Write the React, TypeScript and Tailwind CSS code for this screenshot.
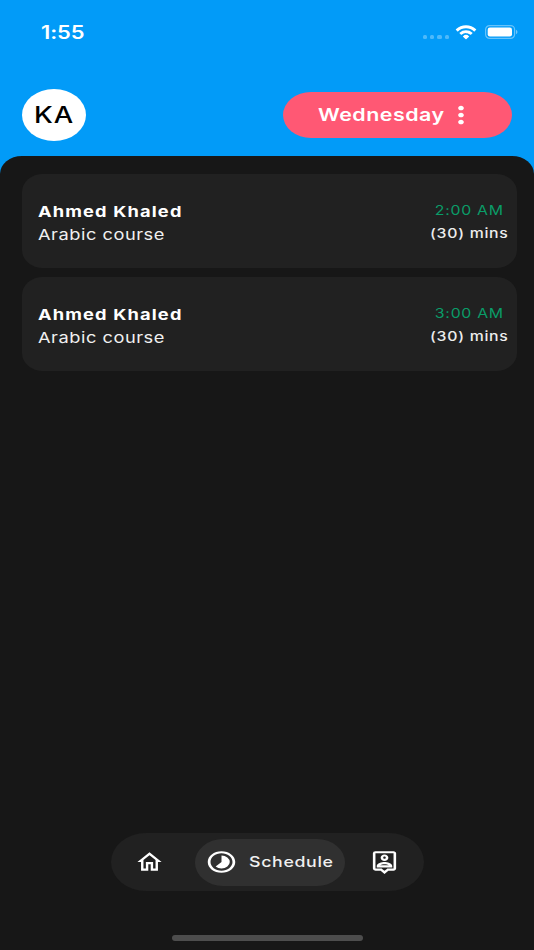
import type { ReactNode } from "react";
import { MdMoreVert, MdOutlineHome, MdOutlinePersonPin, MdOutlineTimelapse } from "react-icons/md";

interface Lesson {
  id: number;
  name: string;
  course: string;
  time: string;
  duration: string;
}

const lessons: Lesson[] = [
  { id: 1, name: "Ahmed Khaled", course: "Arabic course", time: "2:00 AM", duration: "(30) mins" },
  { id: 2, name: "Ahmed Khaled", course: "Arabic course", time: "3:00 AM", duration: "(30) mins" },
];

// Wide lettering used across the whole app
function Wide({ className = "", children }: { className?: string; children: ReactNode }) {
  return (
    <span className={`block whitespace-nowrap origin-left scale-x-[1.216] ${className}`}>{children}</span>
  );
}

function StatusBar() {
  return (
    <div className="flex h-[64px] items-center justify-between pl-[41px] pr-[15px]">
      <Wide className="pt-[2px] text-[18px] leading-[22px] font-semibold tracking-[-0.1px]">1:55</Wide>
      <div className="flex items-center">
        <div className="mr-[6px] mt-[9px] flex gap-[3px]">
          {[0, 1, 2, 3].map((i) => (
            <div key={i} className="h-[4px] w-[4.3px] rounded-[1.5px] bg-white/30" />
          ))}
        </div>
        <svg className="mr-[8px] h-[15px] w-[22px]" viewBox="0 0 17 12" preserveAspectRatio="none" fill="#fff">
          <path d="M8.5 2.6c2.3 0 4.5.9 6.2 2.5.1.1.3.1.4 0l1.2-1.3c.1-.1.1-.3 0-.4a11.3 11.3 0 0 0-15.6 0c-.1.1-.1.3 0 .4l1.2 1.3c.1.1.3.1.4 0A9 9 0 0 1 8.5 2.6z" />
          <path d="M8.5 6.5c1.3 0 2.5.5 3.4 1.3.1.1.3.1.4 0l1.2-1.3c.1-.1.1-.3 0-.4a7.3 7.3 0 0 0-10 0c-.1.1-.1.3 0 .4l1.2 1.3c.1.1.3.1.4 0A5 5 0 0 1 8.5 6.5z" />
          <path d="M10.8 9.3c.1-.1.1-.3 0-.4a3.5 3.5 0 0 0-4.6 0c-.1.1-.1.3 0 .4l2.1 2.1c.1.1.3.1.4 0z" />
        </svg>
        <svg className="h-[14px] w-[34px]" viewBox="0 0 34 14" fill="none">
          <rect x="0.6" y="0.6" width="29" height="12.8" rx="4" stroke="#fff" strokeOpacity="0.4" strokeWidth="1.2" />
          <rect x="2.7" y="2.5" width="24.3" height="9" rx="2.2" fill="#fff" />
          <path d="M31 4.8v4.4c2-.8 2-3.6 0-4.4z" fill="#fff" fillOpacity="0.45" />
        </svg>
      </div>
    </div>
  );
}

function LessonCard({ lesson }: { lesson: Lesson }) {
  return (
    <div className="flex h-[94px] rounded-[21px/18px] bg-[#212121]">
      <div className="flex-1 pl-[16.5px] pt-[26px] text-[15px] leading-[23px]">
        <Wide className="font-bold tracking-[0.95px]">{lesson.name}</Wide>
        <Wide className="tracking-[0.43px] text-[#f0f0f0]">{lesson.course}</Wide>
      </div>
      <div className="w-[87px] pt-[25px] text-[13px] leading-[23px]">
        <Wide className="pl-[4px] tracking-[0.6px] text-[#0a9c68]">{lesson.time}</Wide>
        <Wide className="font-medium tracking-[0.6px] text-[#ededed]">{lesson.duration}</Wide>
      </div>
    </div>
  );
}

function BottomNav() {
  return (
    <nav className="mx-auto flex h-[58px] w-[313px] items-center rounded-[35px/29px] bg-[#212121]">
      <div className="flex w-[84px] justify-center pr-[6px]">
        <MdOutlineHome className="h-[26px] w-[29px]" preserveAspectRatio="none" />
      </div>
      <div className="flex h-[47px] w-[150px] items-center rounded-[28px/23.5px] bg-[#303030] pl-[10px]">
        <MdOutlineTimelapse className="mb-px h-[26px] w-[33px]" preserveAspectRatio="none" />
        <Wide className="ml-[11.5px] pt-px text-[14.6px] font-medium tracking-[0.55px] text-[#f0f0f0]">Schedule</Wide>
      </div>
      <div className="flex w-[79px] justify-center">
        <MdOutlinePersonPin className="h-[26px] w-[31px]" preserveAspectRatio="none" />
      </div>
    </nav>
  );
}

export default function App() {
  return (
    <div className="h-[950px] w-[534px] overflow-hidden bg-[#029bf8] font-['Inter',sans-serif] text-white">
      <div className="flex h-full flex-col">
        <StatusBar />

        {/* Header */}
        <header className="flex h-[92px] items-start justify-between pl-[21.5px] pr-[22px] pt-[25px]">
          <div className="flex h-[52px] w-[64px] items-center rounded-[50%] bg-white pl-[12px]">
            <Wide className="text-[22.5px] font-medium tracking-[0.7px] text-black">KA</Wide>
          </div>
          <button className="mt-[3px] flex h-[46px] w-[229px] items-center rounded-[28px/23px] bg-[#ff5874] pl-[35px]">
            <div className="w-[126px] text-left">
              <Wide className="text-[17.6px] font-semibold tracking-[0.4px]">Wednesday</Wide>
            </div>
            <MdMoreVert className="h-[28px] w-[34px]" preserveAspectRatio="none" />
          </button>
        </header>

        {/* Schedule */}
        <main className="flex flex-1 flex-col rounded-[22px_22px_0_0/18px_18px_0_0] bg-[#171717] pl-[21.5px] pr-[17px] pt-[18px]">
          <div className="flex flex-col gap-[9px]">
            {lessons.map((lesson) => (
              <LessonCard key={lesson.id} lesson={lesson} />
            ))}
          </div>
          <div className="mt-auto pr-[4px]">
            <BottomNav />
            <div className="mx-auto mb-[9px] mt-[44px] h-[6px] w-[191px] rounded-full bg-[#4d4d4d]" />
          </div>
        </main>
      </div>
    </div>
  );
}
